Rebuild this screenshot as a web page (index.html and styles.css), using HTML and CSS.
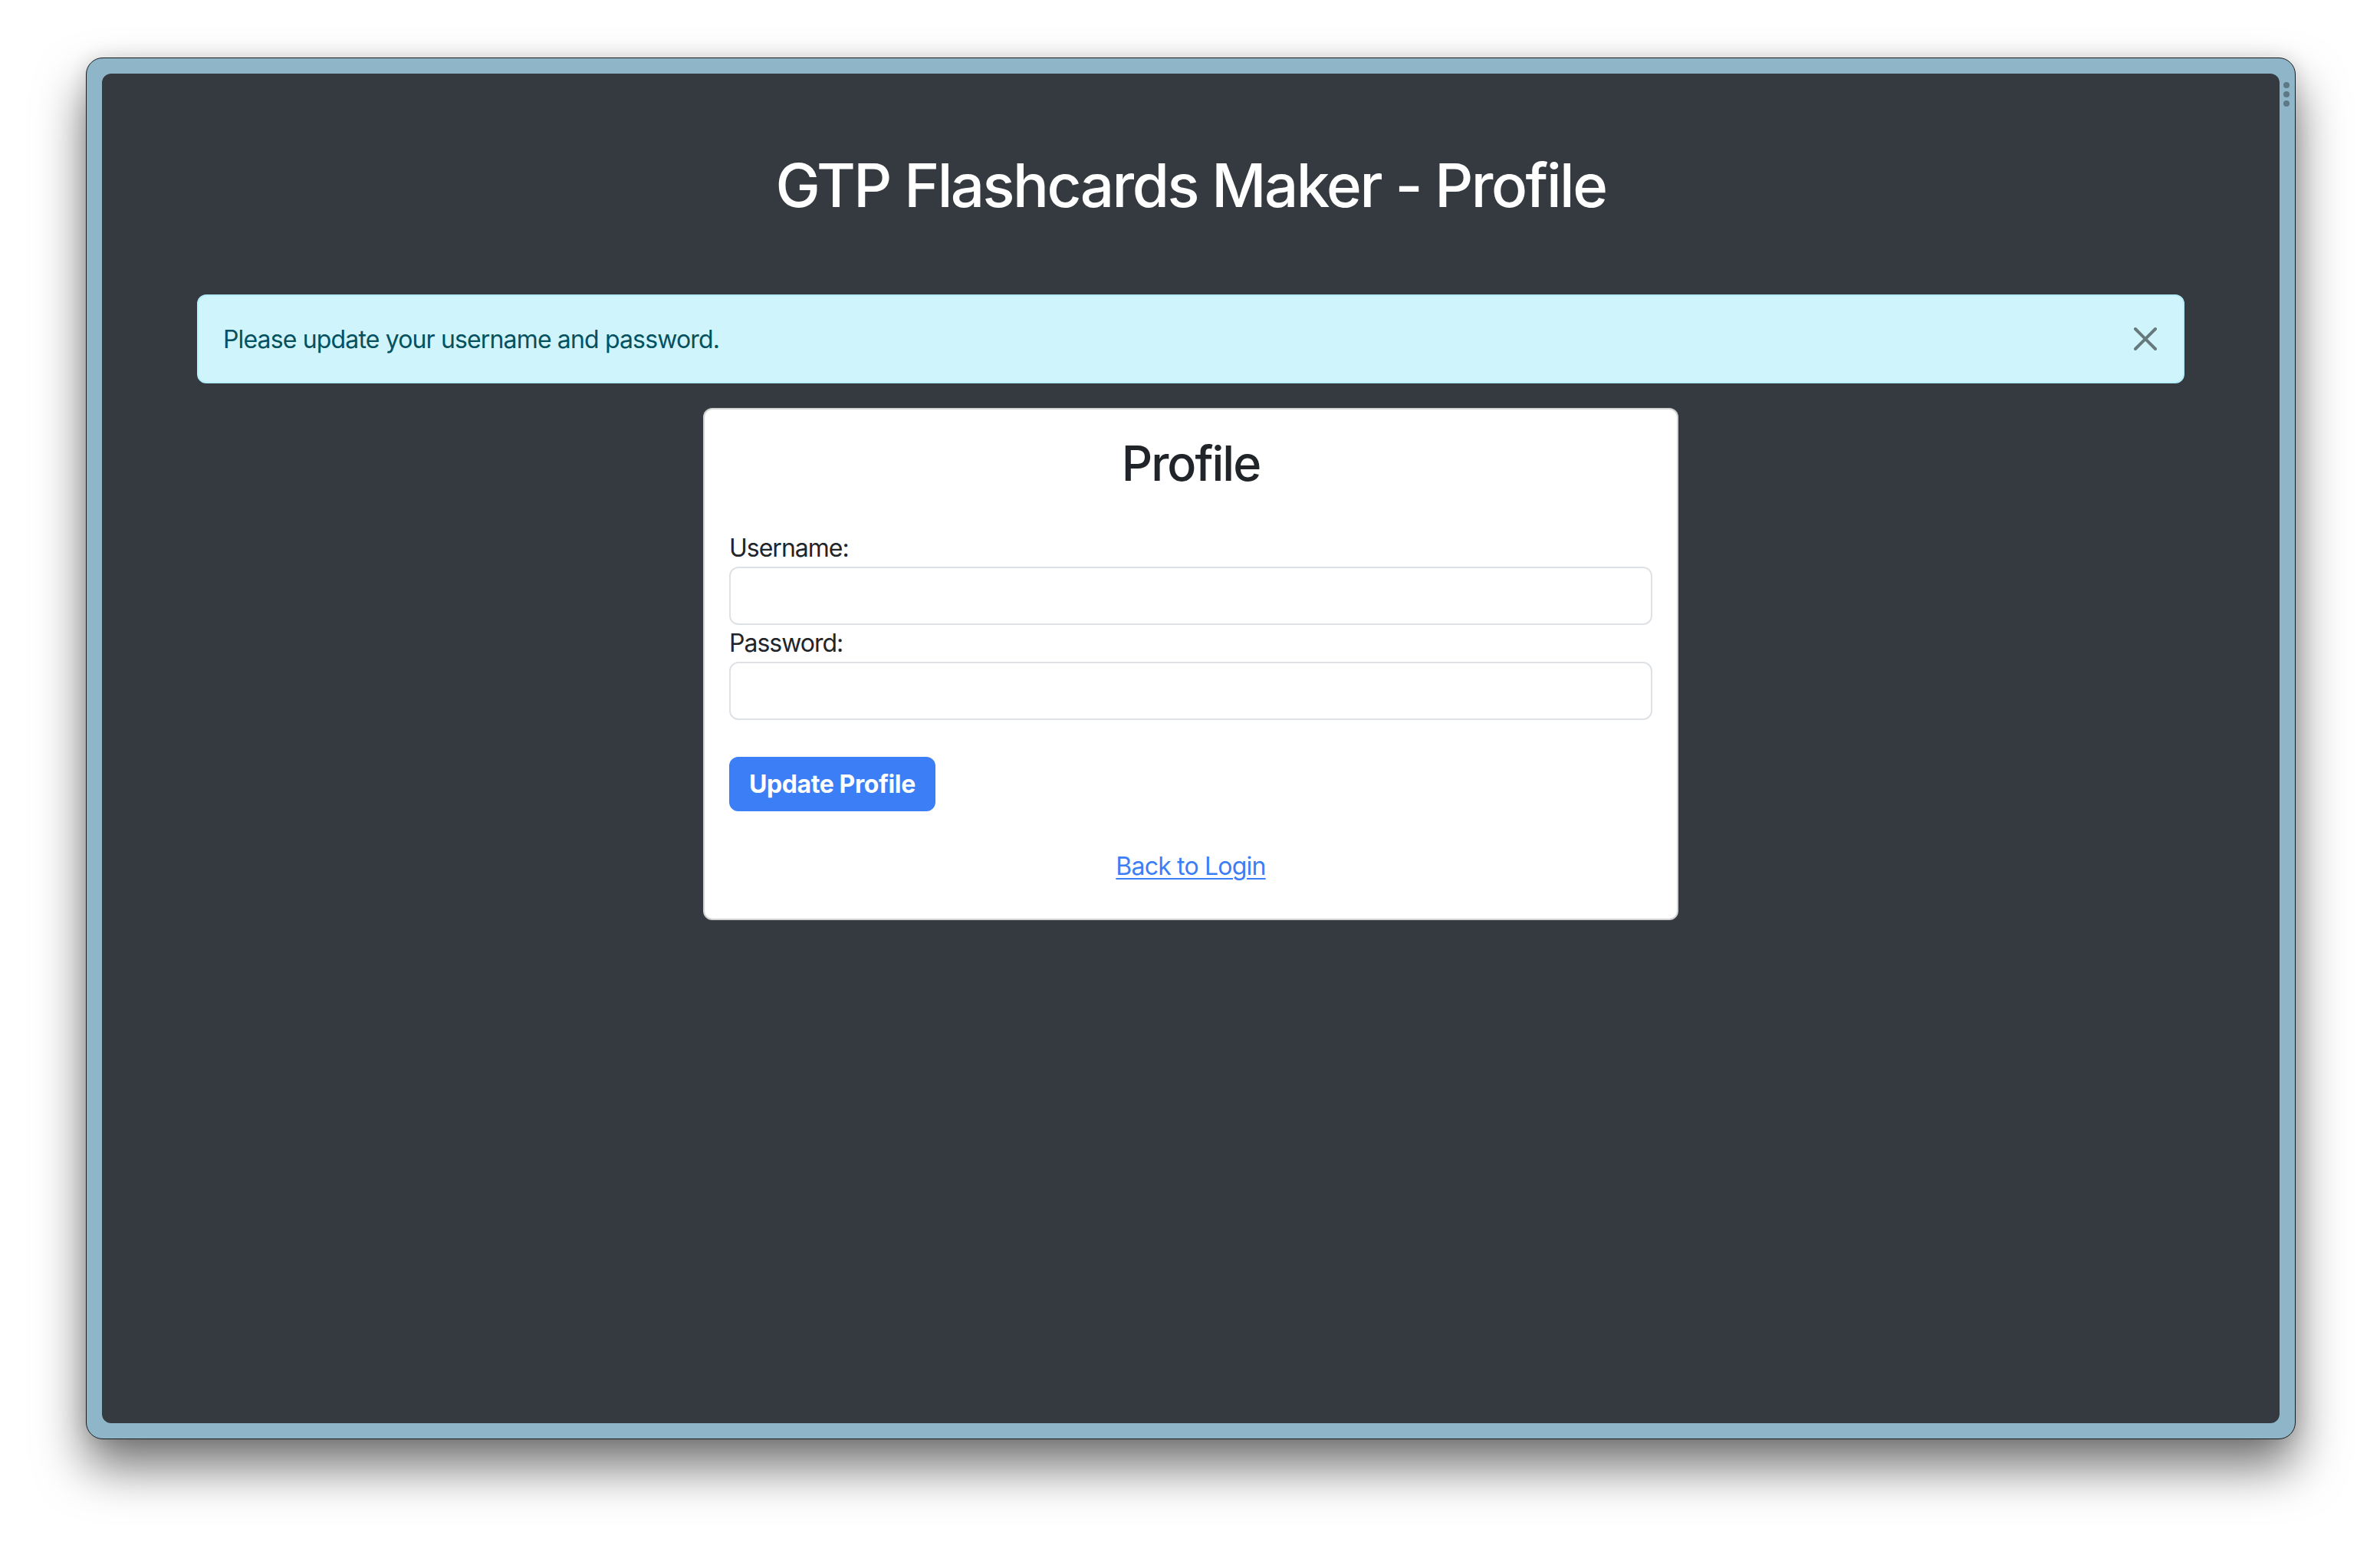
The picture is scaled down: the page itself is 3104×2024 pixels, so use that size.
FILE: index.html
```html
<!DOCTYPE html>
<html lang="en">
<head>
<meta charset="utf-8">
<title>GTP Flashcards Maker - Profile</title>
<link rel="stylesheet" href="styles.css">
</head>
<body>
<div class="window">
  <div class="dots"><span></span><span></span><span></span></div>
  <div class="viewport">
    <div class="container">
      <h1 class="title">GTP Flashcards Maker - Profile</h1>
      <div class="alert">
        Please update your username and password.
        <button class="btn-close" type="button" aria-label="Close">
          <svg viewBox="0 0 30 30" width="30" height="30"><path d="M2 2 L28 28 M28 2 L2 28" stroke="#000" stroke-width="4" stroke-linecap="round" fill="none"/></svg>
        </button>
      </div>
      <div class="card">
        <h2 class="card-title">Profile</h2>
        <form class="form">
          <div class="field">
            <label for="username">Username:</label>
            <input id="username" class="form-control" type="text">
          </div>
          <div class="field">
            <label for="password">Password:</label>
            <input id="password" class="form-control" type="password">
          </div>
          <button class="btn-primary" type="button">Update Profile</button>
        </form>
        <p class="back"><a href="#">Back to Login</a></p>
      </div>
    </div>
  </div>
</div>
</body>
</html>
```

FILE: styles.css
```css
html, body {
  margin: 0;
  padding: 0;
  background: #ffffff;
  overflow: hidden;
}
body {
  width: 3104px;
  height: 2024px;
  padding: 75px 0 0 112px;
  box-sizing: border-box;
  font-family: Inter, "Noto Sans", "Liberation Sans", sans-serif;
}
.window {
  position: relative;
  width: 2882px;
  height: 1802px;
  box-sizing: border-box;
  border: 1px solid #1c1c1c;
  border-radius: 22px;
  padding: 20px;
  background: #8fb5c9;
  box-shadow: 0 36px 64px rgba(0,0,0,0.55), 0 0 24px rgba(0,0,0,0.12);
}
.dots {
  position: absolute;
  right: 7px;
  top: 31px;
  display: flex;
  flex-direction: column;
  gap: 4px;
}
.dots span {
  width: 8px;
  height: 8px;
  border-radius: 50%;
  background: #5e7886;
}
.viewport {
  height: 100%;
  background: #343a40;
  border-radius: 12px;
  overflow: hidden;
}
.container {
  max-width: 2640px;
  margin: 0 auto;
  padding: 0 24px;
  box-sizing: border-box;
}
.title {
  margin: 98px 0 94px;
  font-size: 78px;
  line-height: 96px;
  font-weight: 500;
  color: #ffffff;
  text-align: center;
  letter-spacing: -2.5px;
}
.alert {
  position: relative;
  padding: 33px 96px 31px 32px;
  border: 2px solid #b6effb;
  border-radius: 12px;
  background: #cff4fc;
  color: #055160;
  font-size: 32px;
  line-height: 48px;
  margin-bottom: 32px;
  letter-spacing: -0.85px;
}
.btn-close {
  position: absolute;
  right: 34px;
  top: 41px;
  width: 30px;
  height: 30px;
  padding: 0;
  border: 0;
  background: transparent;
  opacity: 0.5;
  display: flex;
}
.card {
  width: 1272px;
  margin: 0 auto;
  box-sizing: border-box;
  background: #ffffff;
  border: 2px solid rgba(0,0,0,0.175);
  border-radius: 12px;
  padding: 32px 32px 44px;
  color: #212529;
}
.card-title {
  margin: 0 0 48px;
  font-size: 63px;
  line-height: 77px;
  font-weight: 500;
  text-align: center;
  letter-spacing: -2px;
}
.form {
  margin: 0;
  display: flex;
  flex-direction: column;
  align-items: flex-start;
}
.field {
  align-self: stretch;
}
.field label {
  display: inline-block;
  font-size: 32px;
  line-height: 48px;
  letter-spacing: -1px;
}
.form-control {
  display: block;
  width: 100%;
  height: 76px;
  box-sizing: border-box;
  border: 2px solid #dee2e6;
  border-radius: 12px;
  background: #fff;
  padding: 12px 24px;
  font-size: 32px;
  font-family: inherit;
}
.btn-primary {
  margin-top: 48px;
  padding: 11px 26px;
  border: 0;
  border-radius: 12px;
  background: #3b7ef5;
  color: #ffffff;
  font-family: inherit;
  font-size: 32px;
  line-height: 49px;
  font-weight: 700;
  letter-spacing: -0.4px;
}
.back {
  margin: 48px 0 0;
  text-align: center;
  font-size: 32px;
  line-height: 48px;
  letter-spacing: -0.8px;
}
.back a {
  color: #3b7ef5;
  text-decoration: underline;
  text-decoration-thickness: 2px;
  text-underline-offset: 4px;
}
```
